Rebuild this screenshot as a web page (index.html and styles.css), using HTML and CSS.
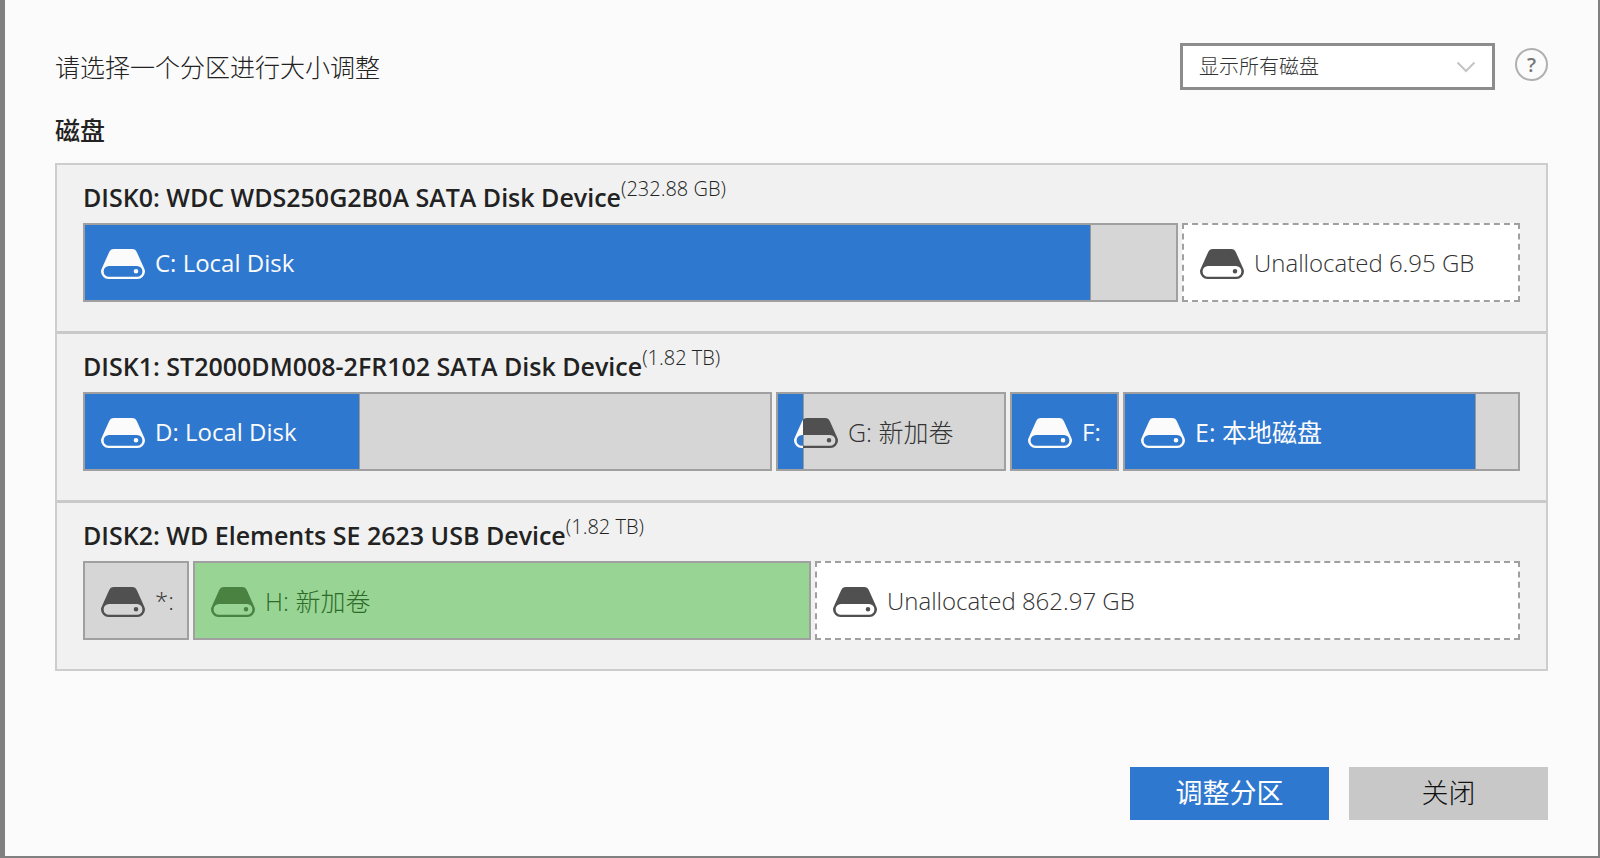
FILE: index.html
```html
<!DOCTYPE html>
<html lang="zh-CN">
<head>
<meta charset="utf-8">
<meta name="viewport" content="width=device-width, initial-scale=1">
<title>调整分区</title>
<link rel="stylesheet" href="styles.css">
</head>
<body>
<svg class="defs" aria-hidden="true">
  <defs>
    <linearGradient id="split-fill" x1="0" x2="1" y1="0" y2="0">
      <stop offset="0.2" stop-color="#fbfbfb"/>
      <stop offset="0.2" stop-color="#505050"/>
    </linearGradient>
    <symbol id="drive" viewBox="0 0 44 30">
      <path fill-rule="evenodd" d="M13 0H31C33.500 0 35 1 36 3.500L42.300 17.500C43.500 20 44 21 44 22.500A7.500 7.500 0 0 1 36.500 30H7.500A7.500 7.500 0 0 1 0 22.500C0 21 .5 20 1.700 17.500L8 3.500C9 1 10.500 0 13 0ZM8 17A5.400 5.400 0 0 0 8 27.800H36A5.400 5.400 0 0 0 36 17ZM35 20A2.300 2.300 0 1 1 35 24.600A2.300 2.300 0 1 1 35 20Z"/>
    </symbol>
  </defs>
</svg>
<main class="dialog">
  <header class="header">
    <h1 class="title">请选择一个分区进行大小调整</h1>
    <div class="tools">
      <div class="picker">
        <select class="picker-select" aria-label="显示磁盘">
          <option>显示所有磁盘</option>
        </select>
        <svg class="picker-arrow" viewBox="0 0 20 12" aria-hidden="true"><path d="M1.500 1.500L10 10L18.500 1.500"/></svg>
      </div>
      <button class="help" type="button" aria-label="帮助">?</button>
    </div>
  </header>

  <h2 class="section-title">磁盘</h2>

  <div class="disks">
    <section class="disk">
      <h3 class="disk-name">DISK0: WDC WDS250G2B0A SATA Disk Device<span class="disk-size">(232.88 GB)</span></h3>
      <div class="bar" style="grid-template-columns:1095fr 338fr">
        <button class="part part-used" type="button">
          <span class="fill" style="width:92.2%"></span>
          <svg class="icon"><use href="#drive"/></svg><span class="label">C: Local Disk</span>
        </button>
        <button class="part part-free" type="button">
          <svg class="icon"><use href="#drive"/></svg><span class="label">Unallocated 6.95 GB</span>
        </button>
      </div>
    </section>

    <section class="disk">
      <h3 class="disk-name">DISK1: ST2000DM008-2FR102 SATA Disk Device<span class="disk-size">(1.82 TB)</span></h3>
      <div class="bar" style="grid-template-columns:689fr 230fr 109fr 397fr">
        <button class="part part-used" type="button">
          <span class="fill" style="width:40.1%"></span>
          <svg class="icon"><use href="#drive"/></svg><span class="label">D: Local Disk</span>
        </button>
        <button class="part part-split" type="button">
          <span class="fill" style="width:11.7%"></span>
          <svg class="icon"><use href="#drive"/></svg><span class="label label-cjk">G: 新加卷</span>
        </button>
        <button class="part part-used" type="button">
          <span class="fill fill-full" style="width:100%"></span>
          <svg class="icon"><use href="#drive"/></svg><span class="label">F:</span>
        </button>
        <button class="part part-used" type="button">
          <span class="fill" style="width:89.4%"></span>
          <svg class="icon"><use href="#drive"/></svg><span class="label label-cjk">E: 本地磁盘</span>
        </button>
      </div>
    </section>

    <section class="disk">
      <h3 class="disk-name">DISK2: WD Elements SE 2623 USB Device<span class="disk-size">(1.82 TB)</span></h3>
      <div class="bar" style="grid-template-columns:106fr 618fr 705fr">
        <button class="part" type="button">
          <svg class="icon"><use href="#drive"/></svg><span class="label">*:</span>
        </button>
        <button class="part part-selected" type="button">
          <svg class="icon"><use href="#drive"/></svg><span class="label label-cjk">H: 新加卷</span>
        </button>
        <button class="part part-free" type="button">
          <svg class="icon"><use href="#drive"/></svg><span class="label">Unallocated 862.97 GB</span>
        </button>
      </div>
    </section>
  </div>

  <footer class="footer">
    <button class="btn btn-primary" type="button">调整分区</button>
    <button class="btn" type="button">关闭</button>
  </footer>
</main>
</body>
</html>
```
FILE: styles.css
```css
* {
  box-sizing: border-box;
}

body {
  margin: 0;
  background: #fbfbfb;
  color: #222;
  font-family: "Open Sans", "Noto Sans CJK SC", sans-serif;
  font-size: 24px;
}

button,
select {
  font: inherit;
  color: inherit;
}

h1,
h2,
h3 {
  margin: 0;
}

.defs {
  position: absolute;
  width: 0;
  height: 0;
}

.dialog {
  display: flex;
  flex-direction: column;
  min-height: 100vh;
  padding: 43px 50px 36px;
  border: solid #808080;
  border-width: 0 2px 2px 5px;
}

.header {
  display: flex;
  align-items: center;
  justify-content: space-between;
}

.title {
  font-size: 25px;
  font-weight: 300;
  line-height: 36px;
}

.tools {
  display: flex;
  align-items: flex-start;
  gap: 20px;
}

.picker {
  position: relative;
  width: 315px;
}

.picker-select {
  display: block;
  width: 100%;
  height: 47px;
  padding: 0 48px 0 16px;
  border: 3px solid #8c8c8c;
  border-radius: 0;
  background: #fff;
  appearance: none;
  color: #333;
  font-size: 20px;
  font-weight: 300;
}

.picker-arrow {
  position: absolute;
  top: 18px;
  right: 19px;
  width: 20px;
  height: 12px;
  fill: none;
  stroke: #c4c4c4;
  stroke-width: 2;
  pointer-events: none;
}

.help {
  width: 33px;
  height: 33px;
  margin-top: 5px;
  padding: 0;
  border: 2px solid #b0b0b0;
  border-radius: 50%;
  background: none;
  color: #777;
  font-size: 20px;
  font-weight: 600;
  line-height: 29px;
}

.section-title {
  margin: 22px 0 15px;
  font-size: 25px;
  font-weight: 500;
  line-height: 36px;
}

.disks {
  border: 2px solid #cdcdcd;
  background: #f1f1f1;
}

.disk {
  padding: 14px 26px 29px;
}

.disk + .disk {
  border-top: 3px solid #c9c9c9;
}

.disk-name {
  display: flex;
  margin-bottom: 8px;
  font-size: 25px;
  font-weight: 600;
  line-height: 36px;
}

.disk-size {
  font-size: 20px;
  font-weight: 300;
  line-height: 20px;
}

.bar {
  display: grid;
  gap: 4px;
}

.part {
  position: relative;
  display: flex;
  align-items: center;
  gap: 10px;
  min-width: 0;
  height: 79px;
  padding: 0 0 0 16px;
  border: 2px solid #a0a0a0;
  border-radius: 0;
  background: #d6d6d6;
  color: #505050;
  text-align: left;
  white-space: nowrap;
}

.fill {
  position: absolute;
  top: 0;
  bottom: 0;
  left: 0;
  border-right: 1px solid #999;
  background: #2f78d0;
}

.fill-full {
  border-right: 0;
}

.icon {
  position: relative;
  flex: none;
  width: 44px;
  height: 30px;
  margin-top: 2px;
  fill: currentColor;
}

.label {
  position: relative;
  color: #333;
  font-weight: 300;
  line-height: 36px;
}

.label-cjk {
  font-size: 25px;
}

.part-used {
  color: #fbfbfb;
}

.part-used .label {
  color: #fbfbfb;
  font-weight: 400;
}

.part-split .icon {
  fill: url(#split-fill);
}

.part-free {
  border-style: dashed;
  background: #fff;
}

.part-selected {
  background: #98d594;
  color: #4a8241;
}

.part-selected .label {
  color: #2f6a2a;
}

.footer {
  display: flex;
  justify-content: flex-end;
  gap: 20px;
  margin-top: auto;
  padding-top: 40px;
}

.btn {
  width: 199px;
  height: 53px;
  padding: 0 0 2px;
  border: 0;
  background: #c8c8c8;
  color: #111;
  font-size: 27px;
  font-weight: 300;
  line-height: 50px;
}

.btn-primary {
  background: #2f78d0;
  color: #fff;
  font-weight: 400;
}
```
